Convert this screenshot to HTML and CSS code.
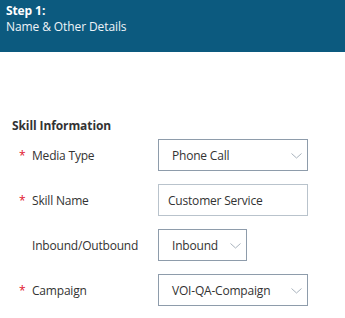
FILE: index.html
```html
<!DOCTYPE html>
<html>
<head>
<meta charset="utf-8">
<link rel="stylesheet" href="styles.css">
</head>
<body>
<header class="step-header">
  <div class="step-num">Step 1:</div>
  <div class="step-name">Name &amp; Other Details</div>
</header>
<section class="skill-section">
  <h2 class="section-title">Skill Information</h2>
  <div class="form-rows">
    <div class="form-row">
      <label class="field-label"><span class="req">*</span>Media Type</label>
      <div class="select wide"><span>Phone Call</span><svg class="chev" width="11" height="6" viewBox="0 0 11 6"><path d="M0.5 0.5 L5.5 5 L10.5 0.5" fill="none" stroke="#a9b3bd" stroke-width="1"/></svg></div>
    </div>
    <div class="form-row">
      <label class="field-label"><span class="req">*</span>Skill Name</label>
      <div class="text-input wide">Customer Service</div>
    </div>
    <div class="form-row">
      <label class="field-label"><span class="req blank"></span>Inbound/Outbound</label>
      <div class="select narrow"><span>Inbound</span><svg class="chev" width="11" height="6" viewBox="0 0 11 6"><path d="M0.5 0.5 L5.5 5 L10.5 0.5" fill="none" stroke="#a9b3bd" stroke-width="1"/></svg></div>
    </div>
    <div class="form-row">
      <label class="field-label"><span class="req">*</span>Campaign</label>
      <div class="select wide"><span>VOI-QA-Compaign</span><svg class="chev" width="11" height="6" viewBox="0 0 11 6"><path d="M0.5 0.5 L5.5 5 L10.5 0.5" fill="none" stroke="#a9b3bd" stroke-width="1"/></svg></div>
    </div>
  </div>
</section>
</body>
</html>
```

FILE: styles.css
```css
html, body {
  margin: 0;
  padding: 0;
  background: #ffffff;
  font-family: "Open Sans", "Noto Sans", sans-serif;
  font-size: 12px;
  color: #333333;
}

.step-header {
  box-sizing: border-box;
  height: 52px;
  background: #0c5a7f;
  color: #ffffff;
  padding: 3px 6px 0 6px;
  line-height: 16px;
  letter-spacing: -0.1px;
}

.step-num {
  font-weight: 700;
}

.step-name {
  color: #eef4f8;
}

.skill-section {
  padding: 66px 0 0 12px;
}

.section-title {
  margin: 0 0 5px 0;
  font-size: 12px;
  line-height: 16px;
  font-weight: 700;
  color: #333333;
  letter-spacing: -0.1px;
}

.form-rows {
  display: flex;
  flex-direction: column;
  gap: 13px;
}

.form-row {
  display: flex;
  align-items: center;
  height: 32px;
}

.field-label {
  width: 146px;
  display: flex;
  align-items: center;
  padding-left: 7px;
  padding-top: 1px;
  box-sizing: border-box;
  font-size: 12px;
  color: #333333;
  letter-spacing: -0.2px;
}

.req {
  width: 13px;
  color: #e0162b;
  font-size: 12px;
}

.select, .text-input {
  box-sizing: border-box;
  height: 32px;
  display: flex;
  align-items: center;
  justify-content: space-between;
  background: #ffffff;
  font-size: 12px;
  color: #333333;
  letter-spacing: -0.2px;
}

.select {
  border: 1px solid #8e9cab;
  padding: 0 5px 0 13px;
}

.text-input {
  border: 1px solid #b9c3cc;
  padding: 0 9px;
}

.wide {
  width: 150px;
}

.narrow {
  width: 89px;
}

.chev {
  display: block;
  margin-top: 1px;
}
```
